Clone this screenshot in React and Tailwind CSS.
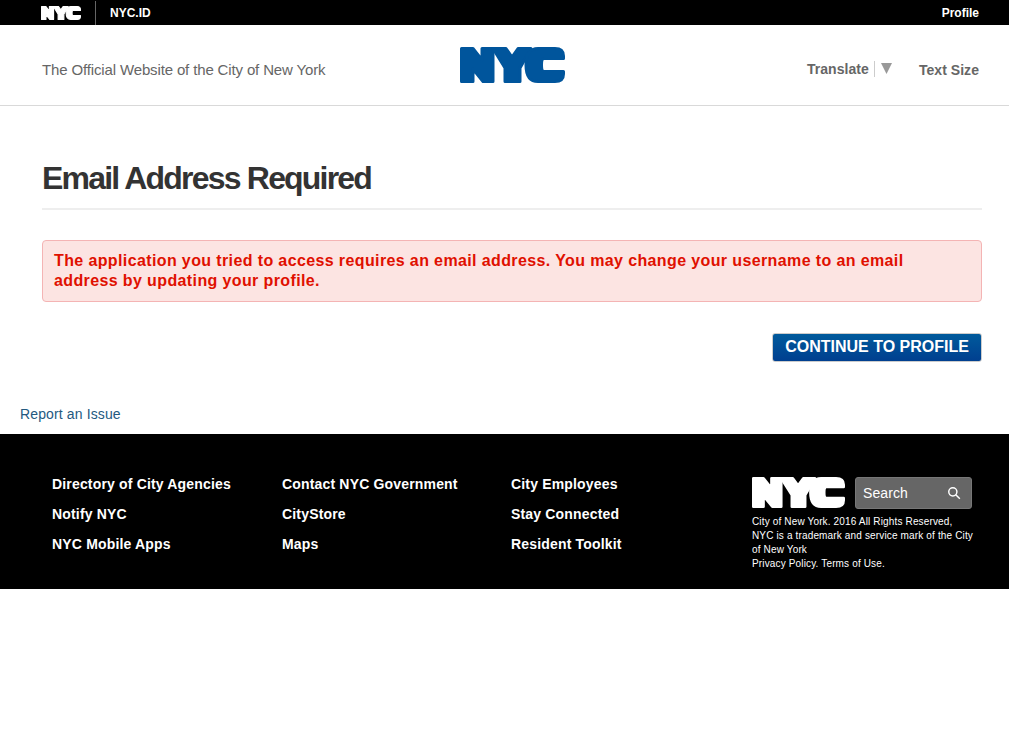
import React from 'react'

function NycLogo({ className }) {
  return (
    <svg viewBox="0 0 105 36" preserveAspectRatio="none" className={className} fill="currentColor" stroke="currentColor" strokeWidth="3" strokeLinejoin="round">
      <path d="M1.5 1.5 H13 L22 13 V1.5 H33 V34.5 H23 L13 22 V34.5 H1.5 Z" />
      <path d="M33 1.5 H46 L52 10 L58 1.5 H71 L60 21 V34.5 H45 V21 Z" />
      <path d="M78 1.5 H95 Q103.5 1.5 103.5 9 V11.5 H84 Q81.5 11.5 81.5 18 Q81.5 24.5 84 24.5 H103.5 V27 Q103.5 34.5 95 34.5 H78 Q66 34.5 66 18 Q66 1.5 78 1.5 Z" />
    </svg>
  )
}

const footerColumns = [
  { className: 'w-[230px]', links: ['Directory of City Agencies', 'Notify NYC', 'NYC Mobile Apps'] },
  { className: 'w-[229px]', links: ['Contact NYC Government', 'CityStore', 'Maps'] },
  { className: 'w-[241px]', links: ['City Employees', 'Stay Connected', 'Resident Toolkit'] },
]

export default function App() {
  return (
    <div className="min-h-[741px] bg-white font-['Liberation_Sans',Arial,sans-serif] text-[#333]">
      {/* top bar */}
      <div className="flex h-[25px] items-center bg-black pl-[41px] pr-[30px] text-xs font-bold text-white">
        <NycLogo className="h-[14px] w-[40px]" />
        <div className="ml-[14px] h-[24px] w-px bg-[#666]" />
        <a className="ml-[14px]">NYC.ID</a>
        <a className="ml-auto">Profile</a>
      </div>

      {/* header */}
      <header className="flex h-[81px] items-center border-b border-[#d9d9d9] pl-[42px] pr-[30px]">
        <p className="w-[418px] pt-[9px] text-[15px] leading-5 tracking-[-0.14px] text-[#666]">The Official Website of the City of New York</p>
        <NycLogo className="mb-[1px] h-[36px] w-[105px] text-[#00559c]" />
        <div className="ml-auto flex items-center pt-[9px] text-sm font-bold tracking-[0.05px] text-[#666]">
          <span className="mb-[2px]">Translate</span>
          <span className="mb-[2px] ml-[5px] h-[16px] w-px bg-[#ccc]" />
          <svg viewBox="0 0 11 11" className="mb-[2px] ml-[6px] h-[11px] w-[11px] text-[#999]" fill="currentColor">
            <path d="M0 0 H11 L5.5 11 Z" />
          </svg>
          <span className="ml-[27px]">Text Size</span>
        </div>
      </header>

      {/* content */}
      <main className="pl-[27px] pr-[12px] pb-[10px]">
        <div className="px-[15px]">
          <h1 className="mt-[52px] border-b-2 border-[#eee] pb-[10px] text-[32px] leading-[40px] font-bold tracking-[-1.8px]">Email Address Required</h1>
          <div className="mt-[30px] rounded border border-[#f4b4b4] bg-[#fce4e2] px-[11px] py-[10px] text-base leading-[20px] font-bold tracking-[0.38px] text-[#e01000]">
            The application you tried to access requires an email address. You may change your username to an email address by updating your profile.
          </div>
          <div className="mt-[31px] flex justify-end">
            <button className="h-[29px] w-[210px] rounded-[3px] border border-[#ccc] bg-gradient-to-b from-[#005a9c] to-[#003f8f] pb-[2px] text-base font-bold text-white">CONTINUE TO PROFILE</button>
          </div>
        </div>
        <a className="mt-[42px] -ml-[7px] block text-sm leading-5 tracking-[0.13px] text-[#24597f]">Report an Issue</a>
      </main>

      {/* footer */}
      <footer className="flex h-[155px] bg-black pt-[40px] pl-[52px] text-white">
        {footerColumns.map((col) => (
          <ul key={col.links[0]} className={col.className + ' flex flex-col gap-[10px] text-sm leading-5 font-bold tracking-[0.17px]'}>
            {col.links.map((link) => (
              <li key={link}>{link}</li>
            ))}
          </ul>
        ))}
        <div className="mt-[3px] w-[225px]">
          <div className="flex items-center gap-[10px]">
            <NycLogo className="mb-[1px] h-[31px] w-[93px]" />
            <div className="flex h-[32px] w-[117px] items-center justify-between rounded-[3px] border border-[#777] bg-[#666] pl-[7px] pr-[10px] text-sm tracking-[0.1px]">
              <span>Search</span>
              <svg viewBox="0 0 24 24" className="h-[14px] w-[14px]" fill="none" stroke="currentColor" strokeWidth="2.5">
                <circle cx="10" cy="10" r="7" />
                <path d="M15 15 L22 22" />
              </svg>
            </div>
          </div>
          <p className="mt-[6px] text-[10px] leading-[14px] tracking-[0.15px]">
            City of New York. 2016 All Rights Reserved,<br />
            NYC is a trademark and service mark of the City<br />
            of New York<br />
            Privacy Policy. Terms of Use.
          </p>
        </div>
      </footer>
    </div>
  )
}
